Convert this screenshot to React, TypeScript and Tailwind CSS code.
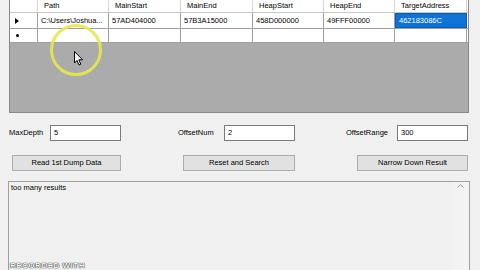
import React from 'react';

const cols = [
  { name: '', w: 'w-[28px]' },
  { name: 'Path', w: 'w-[71px]' },
  { name: 'MainStart', w: 'w-[72px]' },
  { name: 'MainEnd', w: 'w-[72px]' },
  { name: 'HeapStart', w: 'w-[71px]' },
  { name: 'HeapEnd', w: 'w-[71px]' },
  { name: 'TargetAddress', w: 'w-[72px]' },
];

const row1 = ['C:\\Users\\Joshua...', '57AD404000', '57B3A15000', '458D000000', '49FFF00000', '462183086C'];

const App = () => {
  return (
    <div className="relative w-[480px] h-[270px] overflow-hidden bg-[#f0f0f0] text-[7.5px] text-black font-['Liberation_Sans',Arial,sans-serif] leading-none">
      {/* data grid */}
      <div className="ml-[9px] w-[460px] h-[113px] border-r border-l border-b border-[#8a8a8a] bg-[#ababab] flex flex-col">
        {/* header */}
        <div className="flex h-[13px] bg-white border-b border-[#c8c8c8]">
          {cols.map((c, i) => (
            <div key={i} className={`${c.w} shrink-0 border-r border-[#d6d6d6] flex items-center px-[6px]`}>
              {c.name}
            </div>
          ))}
        </div>
        {/* row 1 */}
        <div className="flex h-[16px] bg-white border-b border-[#a0a0a0]">
          <div className="w-[28px] shrink-0 border-r border-[#a0a0a0] flex items-center pl-[5px]">
            <svg width="4" height="6" viewBox="0 0 4 6"><path d="M0 0 L4 3 L0 6 Z" fill="#000" /></svg>
          </div>
          {row1.map((v, i) => (
            <div
              key={i}
              className={`${cols[i + 1].w} shrink-0 flex items-center px-[3px] whitespace-nowrap overflow-hidden ${
                i === 5 ? 'bg-[#0f72d6] text-white border border-[#0a5bb0]' : 'border-r border-[#a0a0a0]'
              }`}
            >
              {v}
            </div>
          ))}
        </div>
        {/* new row */}
        <div className="flex h-[14px] bg-white border-b border-[#a0a0a0]">
          <div className="w-[28px] shrink-0 border-r border-[#a0a0a0] flex items-center pl-[6px]">
            <span className="w-[3px] h-[3px] rounded-full bg-black"></span>
          </div>
          {cols.slice(1).map((c, i) => (
            <div key={i} className={`${c.w} shrink-0 border-r border-[#a0a0a0]`}></div>
          ))}
        </div>
      </div>

      {/* parameters */}
      <div className="flex items-center h-[16px] mt-[12px] pl-[9px]">
        <span className="w-[41px]">MaxDepth</span>
        <div className="w-[71px] h-[16px] bg-white border border-[#7a7a7a] flex items-center px-[3px]">5</div>
        <span className="ml-[57px] w-[46px]">OffsetNum</span>
        <div className="w-[71px] h-[16px] bg-white border border-[#7a7a7a] flex items-center px-[3px]">2</div>
        <span className="ml-[51px] w-[51px]">OffsetRange</span>
        <div className="w-[71px] h-[16px] bg-white border border-[#7a7a7a] flex items-center px-[3px]">300</div>
      </div>

      {/* buttons */}
      <div className="flex h-[16px] mt-[14px] pl-[12px]">
        <div className="w-[109px] bg-[#e1e1e1] border border-[#adadad] flex items-center justify-center">Read 1st Dump Data</div>
        <div className="ml-[62px] w-[112px] bg-[#e1e1e1] border border-[#adadad] flex items-center justify-center">Reset and Search</div>
        <div className="ml-[62px] w-[111px] bg-[#e1e1e1] border border-[#adadad] flex items-center justify-center">Narrow Down Result</div>
      </div>

      {/* output log */}
      <div className="ml-[8px] mt-[10px] w-[462px] h-[100px] border border-[#a0a0a0] flex">
        <div className="flex-1 pl-[2px] pt-[2px]">too many results</div>
        <div className="w-[17px] bg-[#f3f3f3] flex justify-center pt-[2px] text-[#a0a0a0]">
          <svg width="7" height="4" viewBox="0 0 7 4"><path d="M0.5 3.5 L3.5 0.5 L6.5 3.5" fill="none" stroke="#9a9a9a" strokeWidth="1" /></svg>
        </div>
      </div>

      {/* recorder watermark */}
      <div className="absolute left-[10px] top-[262px] text-white font-bold text-[8px] tracking-[0.5px] [text-shadow:0_0_1px_#000,0_0_1px_#000]">
        RECORDED WITH
      </div>

      {/* cursor highlight */}
      <div className="absolute left-[50px] top-[24px] w-[52px] h-[52px] rounded-full border-[3px] border-[#e8e84a]/90"></div>
      <svg className="absolute left-[74px] top-[51px]" width="10" height="15" viewBox="0 0 10 15">
        <path d="M0.5 0.5 L0.5 12 L3 9.5 L5 14 L6.8 13.2 L4.8 8.8 L8.5 8.8 Z" fill="#fff" stroke="#000" strokeWidth="1" strokeLinejoin="round" />
      </svg>
    </div>
  );
};

export default App;
